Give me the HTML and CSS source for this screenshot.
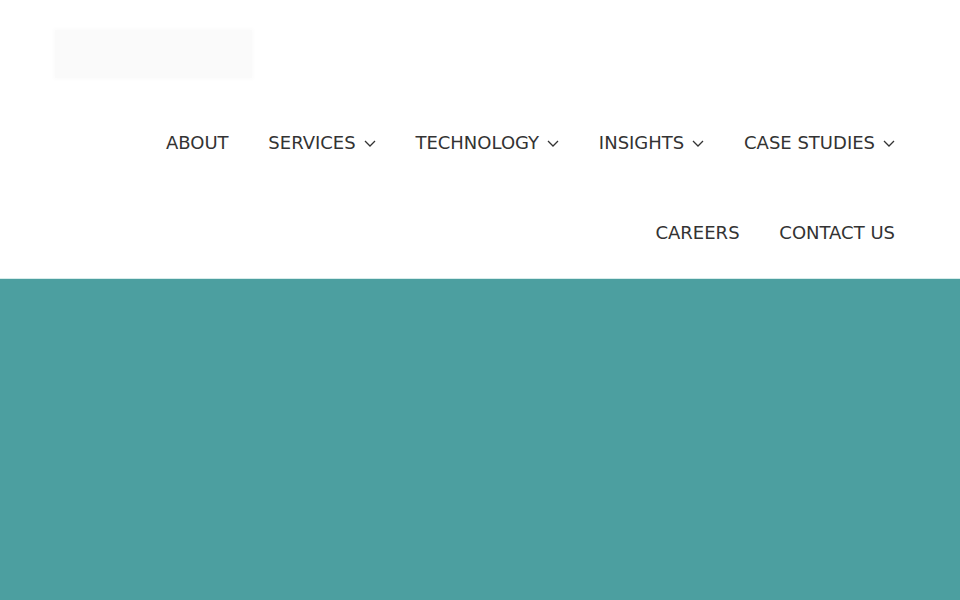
FILE: index.html
```html
<!DOCTYPE html>
<html lang="en">
<head>
<meta charset="utf-8">
<title>Site</title>
<link rel="stylesheet" href="styles.css">
</head>
<body>
<header class="site-header">
  <div class="logo"></div>
  <nav class="menu">
    <a class="item" href="#">ABOUT</a>
    <a class="item" href="#">SERVICES<svg class="chev" viewBox="0 0 12 7"><path d="M1 1 L6 6 L11 1"/></svg></a>
    <a class="item" href="#">TECHNOLOGY<svg class="chev" viewBox="0 0 12 7"><path d="M1 1 L6 6 L11 1"/></svg></a>
    <a class="item" href="#">INSIGHTS<svg class="chev" viewBox="0 0 12 7"><path d="M1 1 L6 6 L11 1"/></svg></a>
    <a class="item" href="#">CASE STUDIES<svg class="chev" viewBox="0 0 12 7"><path d="M1 1 L6 6 L11 1"/></svg></a>
    <a class="item" href="#">CAREERS</a>
    <a class="item" href="#">CONTACT US</a>
  </nav>
</header>
<main class="hero"></main>
</body>
</html>
```
FILE: styles.css
```css
html, body {
  margin: 0;
  padding: 0;
  height: 100%;
  overflow: hidden;
}
body {
  font-family: "DejaVu Sans", sans-serif;
  background: #4c9fa0;
  display: flex;
  flex-direction: column;
}
.site-header {
  background: #ffffff;
  padding: 30px 65px 0 55px;
  height: 279px;
  box-sizing: border-box;
  border-bottom: 1px solid #d6ecea;
  flex-shrink: 0;
}
.logo {
  width: 197px;
  height: 48px;
  background: #fafafa;
  box-shadow: 0 0 4px 2px #fcfcfc;
  margin-bottom: 19px;
}
.menu {
  display: flex;
  flex-wrap: wrap;
  justify-content: flex-end;
  column-gap: 39.75px;
}
.item {
  display: flex;
  align-items: center;
  height: 90px;
  font-size: 18px;
  color: #333333;
  text-decoration: none;
}
.chev {
  width: 12px;
  height: 7px;
  margin-left: 8px;
  margin-top: 2px;
  fill: none;
  stroke: #333333;
  stroke-width: 1.3;
}
.hero {
  flex: 1;
  background: #4c9fa0;
}
```
